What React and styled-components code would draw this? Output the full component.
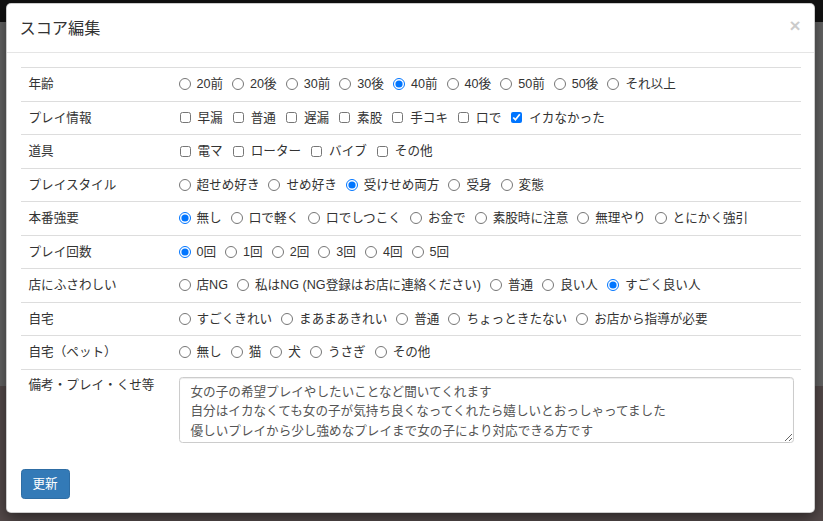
import React from "react";
import styled, { createGlobalStyle } from "styled-components";

const Global = createGlobalStyle`
  html, body { margin: 0; padding: 0; }
  body {
    font-family: "Liberation Sans", "Noto Sans CJK JP", sans-serif;
    color: #333;
  }
`;

const Page = styled.div`
  min-height: 521px;
  padding-top: 3px;
  box-sizing: border-box;
  overflow: hidden;
  background: linear-gradient(
    to bottom,
    #111 0,
    #111 22px,
    #646464 22px,
    #646464 386px,
    #544a4a 386px
  );
`;

const Modal = styled.div`
  width: 809px;
  margin: 0 0 0 6px;
  background: #fff;
  border: 1px solid rgba(0, 0, 0, 0.2);
  border-radius: 5px;
  box-shadow: 0 5px 15px rgba(0, 0, 0, 0.5);
  box-sizing: border-box;
`;

const Header = styled.div`
  display: flex;
  justify-content: space-between;
  align-items: center;
  padding: 13.5px 13.5px 13.5px 12.5px;
  border-bottom: 1px solid #e5e5e5;
`;

const Title = styled.h4`
  margin: 0;
  font-size: 16.2px;
  font-weight: 400;
  line-height: 21px;
  color: #333;
`;

const Close = styled.span`
  font-size: 19px;
  font-weight: 700;
  line-height: 1;
  color: #000;
  opacity: 0.2;
  margin-top: -6px;
`;

const Body = styled.div`
  padding: 14px 13.5px 13.5px 13.5px;
`;

const Table = styled.div`
  display: grid;
  grid-template-columns: 151px 1fr;
  margin-bottom: 19px;
`;

const LabelCell = styled.div`
  border-top: 1px solid #ddd;
  padding: ${(p) => (p.$tall ? "6px 7px 7px 8px" : "7px 7px 7px 8px")};
  font-size: 12.6px;
  line-height: 18.5px;
  color: #333;
`;

const OptionCell = styled.div`
  border-top: 1px solid #ddd;
  padding: 7px 7px 7px 7px;
  display: flex;
  flex-wrap: wrap;
  align-items: center;
  font-size: 12.6px;
  line-height: 18.5px;
`;

const Choice = styled.label`
  display: inline-flex;
  align-items: center;
  margin-right: 9px;
  white-space: nowrap;
  color: #333;
`;

const Input = styled.input`
  width: ${(p) => (p.type === "checkbox" ? "11px" : "12px")};
  height: ${(p) => (p.type === "checkbox" ? "11px" : "12px")};
  margin: 0 ${(p) => (p.type === "checkbox" ? "7px" : "6px")} 0
    ${(p) => (p.type === "checkbox" ? "1px" : "0")};
  flex: none;
`;

const Textarea = styled.textarea`
  display: block;
  width: 100%;
  height: 66px;
  box-sizing: border-box;
  border: 1px solid #ccc;
  border-radius: 3.5px;
  padding: 5px 11px;
  font-family: "Liberation Sans", "Noto Sans CJK JP", sans-serif;
  font-size: 12.6px;
  line-height: 19.5px;
  color: #555;
  overflow: hidden;
  resize: vertical;
  box-shadow: inset 0 1px 1px rgba(0, 0, 0, 0.075);
`;

const Button = styled.button`
  display: inline-block;
  font-family: "Liberation Sans", "Noto Sans CJK JP", sans-serif;
  font-size: 12.6px;
  line-height: 18px;
  padding: 5px 11px;
  height: 30px;
  color: #fff;
  background: #337ab7;
  border: 1px solid #2e6da4;
  border-radius: 3.5px;
`;

const rows = [
  {
    label: "年齢",
    type: "radio",
    options: ["20前", "20後", "30前", "30後", "40前", "40後", "50前", "50後", "それ以上"],
    checked: [4],
  },
  {
    label: "プレイ情報",
    type: "checkbox",
    options: ["早漏", "普通", "遅漏", "素股", "手コキ", "口で", "イカなかった"],
    checked: [6],
  },
  {
    label: "道具",
    type: "checkbox",
    options: ["電マ", "ローター", "バイブ", "その他"],
    checked: [],
  },
  {
    label: "プレイスタイル",
    type: "radio",
    options: ["超せめ好き", "せめ好き", "受けせめ両方", "受身", "変態"],
    checked: [2],
  },
  {
    label: "本番強要",
    type: "radio",
    options: ["無し", "口で軽く", "口でしつこく", "お金で", "素股時に注意", "無理やり", "とにかく強引"],
    checked: [0],
  },
  {
    label: "プレイ回数",
    type: "radio",
    options: ["0回", "1回", "2回", "3回", "4回", "5回"],
    checked: [0],
  },
  {
    label: "店にふさわしい",
    type: "radio",
    options: ["店NG", "私はNG (NG登録はお店に連絡ください)", "普通", "良い人", "すごく良い人"],
    checked: [4],
  },
  {
    label: "自宅",
    type: "radio",
    options: ["すごくきれい", "まあまあきれい", "普通", "ちょっときたない", "お店から指導が必要"],
    checked: [],
  },
  {
    label: "自宅（ペット）",
    type: "radio",
    options: ["無し", "猫", "犬", "うさぎ", "その他"],
    checked: [],
  },
];

const note =
  "女の子の希望プレイやしたいことなど聞いてくれます\n自分はイカなくても女の子が気持ち良くなってくれたら嬉しいとおっしゃってました\n優しいプレイから少し強めなプレイまで女の子により対応できる方です";

export default function App() {
  return (
    <>
      <Global />
      <Page>
        <Modal>
          <Header>
            <Title>スコア編集</Title>
            <Close>×</Close>
          </Header>
          <Body>
            <Table>
              {rows.map((r, ri) => (
                <React.Fragment key={r.label}>
                  <LabelCell>{r.label}</LabelCell>
                  <OptionCell>
                    {r.options.map((o, oi) => (
                      <Choice key={o}>
                        <Input
                          type={r.type}
                          name={`row${ri}`}
                          defaultChecked={r.checked.includes(oi)}
                        />
                        {o}
                      </Choice>
                    ))}
                  </OptionCell>
                </React.Fragment>
              ))}
              <LabelCell $tall>備考・プレイ・くせ等</LabelCell>
              <OptionCell>
                <Textarea defaultValue={note} />
              </OptionCell>
            </Table>
            <Button>更新</Button>
          </Body>
        </Modal>
      </Page>
    </>
  );
}
